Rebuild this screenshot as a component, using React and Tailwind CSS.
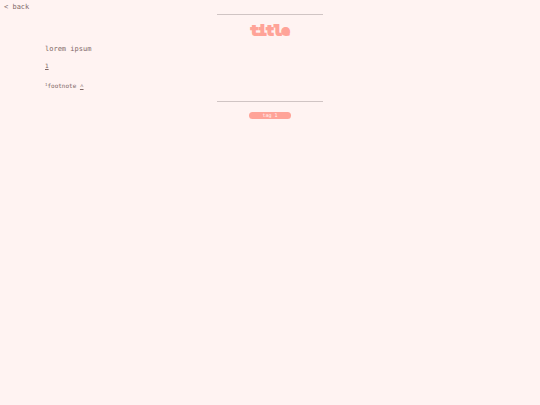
const TAGS = ['tag 1'];

function Divider() {
    return <hr className="w-1/5 mx-auto border-t border-[#d0c4c4]" />;
}

export default function App() {
    return (
        <div className="min-h-screen bg-[#fff3f2] text-[#806866] font-['DejaVu_Sans_Mono',monospace] text-[7px] leading-[14px]">
            <nav className="px-1 h-3.5">
                <a href="#home" className="block w-fit">&lt; back</a>
            </nav>

            <main className="px-[5px]">
                <Divider />

                <h1 className="mt-1 text-center text-[13px] leading-[23px] font-bold text-[#ffa398] [-webkit-text-stroke:2px_#ffa398]">
                    title
                </h1>

                {/* Post body */}
                <article className="mx-10 h-[59px]">
                    <p>lorem ipsum</p>
                    <p className="mt-1 text-[6px] leading-3">
                        <a id="ref-1" href="#note-1" className="underline">1</a>
                    </p>
                    <p id="note-1" className="mt-2 text-[6px] leading-3">
                        <sup className="text-[4px]">1</sup>footnote <a href="#ref-1" className="font-['Liberation_Mono',monospace] underline">^</a>
                    </p>
                </article>

                <Divider />

                <ul className="mt-2.5 flex justify-center gap-1">
                    {TAGS.map((tag) => (
                        <li key={tag}>
                            <a href="#tag" className="block w-[42px] rounded-full bg-[#ffa398] text-center text-[5px] leading-[7px] text-[#fff3f2]">{tag}</a>
                        </li>
                    ))}
                </ul>
            </main>
        </div>
    );
}
